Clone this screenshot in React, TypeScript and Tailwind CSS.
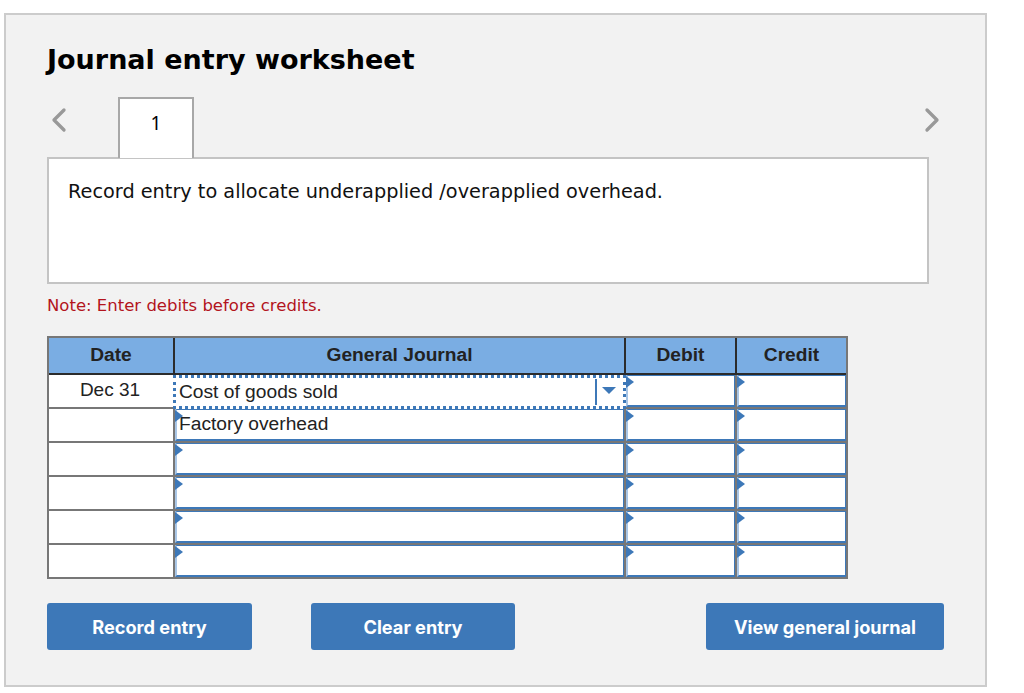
import { ChevronLeft, ChevronRight } from 'lucide-react';

const rows = [
    { date: 'Dec 31', account: 'Cost of goods sold', focused: true },
    { date: '', account: 'Factory overhead', focused: false },
    { date: '', account: '', focused: false },
    { date: '', account: '', focused: false },
    { date: '', account: '', focused: false },
    { date: '', account: '', focused: false },
];

function Marker() {
    return <span className="absolute left-[-2px] top-0 h-0 w-0 border-y-[6px] border-l-[8px] border-y-transparent border-l-[#3d78b8]" />;
}

function EntryCell({ text }: { text?: string }) {
    return (
        <div className="relative h-full border-t border-r border-b-2 border-l-2 border-[#3d78b8] border-l-[#a9c6e6] bg-white pl-[2px] text-[19.2px] leading-[28px] text-[#222]">
            <Marker />
            {text}
        </div>
    );
}

function ActionButton({ label, width }: { label: string; width: string }) {
    return (
        <button className={`h-[47px] ${width} rounded-[3px] bg-[#3d78b8] pt-[2px] font-['Inter',sans-serif] text-[18.2px] font-bold text-white`}>
            {label}
        </button>
    );
}

export default function App() {
    return (
        <div className="h-[693px] w-[1024px] overflow-hidden bg-white pl-[4px] pt-[13px] font-['Liberation_Sans',sans-serif]">
            <div className="h-[674px] w-[983px] border-2 border-[#cccccc] bg-[#f2f2f2] pl-[41px] pt-[28px]">
                <h1 className="font-['DejaVu_Sans',sans-serif] text-[27px] font-bold leading-[34px] text-black">Journal entry worksheet</h1>

                {/* Tabs row */}
                <div className="mt-[20px] flex h-[60px] w-[897px] items-start justify-between">
                    <div className="flex items-start">
                        <ChevronLeft className="-ml-[8px] mt-[3px] h-[40px] w-[40px] text-[#999999]" strokeWidth={2} />
                        <div className="relative z-10 ml-[39px] flex h-[61px] w-[76px] items-start justify-center border-2 border-b-0 border-[#a8a8a8] bg-white pt-[11px] font-['Noto_Sans',sans-serif] text-[19px] leading-[26px] text-black">
                            1
                        </div>
                    </div>
                    <ChevronRight className="-mr-[8px] mt-[3px] h-[40px] w-[40px] text-[#999999]" strokeWidth={2} />
                </div>

                <div className="h-[127px] w-[882px] border-2 border-[#c4c4c4] bg-white pl-[19px] pt-[20px] font-['DejaVu_Sans',sans-serif] text-[19.3px] leading-[26px] text-[#111]">
                    Record entry to allocate underapplied /overapplied overhead.
                </div>

                <p className="mt-[12px] font-['DejaVu_Sans',sans-serif] text-[16.5px] leading-[20px] text-[#b3141d]">Note: Enter debits before credits.</p>

                {/* Journal table */}
                <div className="mt-[20px] w-[801px] border-2 border-[#777777]">
                    <div className="grid h-[37px] grid-cols-[126px_451px_111px_109px] border-b-2 border-[#2b2b2b] bg-[#7aade3] text-center text-[19.2px] font-bold leading-[33px] text-[#222]">
                        <div className="border-r-2 border-[#2b2b2b]">Date</div>
                        <div className="border-r-2 border-[#2b2b2b]">General Journal</div>
                        <div className="border-r-2 border-[#2b2b2b]">Debit</div>
                        <div>Credit</div>
                    </div>
                    {rows.map((row, i) => (
                        <div key={i} className={`grid grid-cols-[126px_451px_111px_109px] bg-white ${i < rows.length - 1 ? 'h-[34px] border-b-2 border-[#777777]' : 'h-[32px]'}`}>
                            <div className="border-r-2 border-[#777777] pr-[2px] text-center text-[19px] leading-[30px] text-[#222]">{row.date}</div>
                            <div className="relative border-r-2 border-[#777777]">
                                {row.focused ? (
                                    <div className="absolute inset-x-[-2px] top-0 bottom-[-2px] z-10 flex border-[3px] border-dotted border-[#3d78b8] bg-white pl-[3px] text-[19.2px] leading-[27px] text-[#222]">
                                        <span className="flex-1">{row.account}</span>
                                        <span className="my-[1px] flex w-[28px] justify-center border-l-2 border-[#3d78b8] pr-[2px] pt-[8px]">
                                            <span className="h-0 w-0 border-x-[7px] border-t-[7px] border-x-transparent border-t-[#3d78b8]" />
                                        </span>
                                    </div>
                                ) : (
                                    <EntryCell text={row.account} />
                                )}
                            </div>
                            <div className="border-r-2 border-[#777777]">
                                <EntryCell />
                            </div>
                            <div>
                                <EntryCell />
                            </div>
                        </div>
                    ))}
                </div>

                <div className="mt-[24px] flex w-[897px]">
                    <ActionButton label="Record entry" width="w-[205px]" />
                    <div className="ml-[59px]">
                        <ActionButton label="Clear entry" width="w-[204px]" />
                    </div>
                    <div className="ml-auto">
                        <ActionButton label="View general journal" width="w-[238px]" />
                    </div>
                </div>
            </div>
        </div>
    );
}
